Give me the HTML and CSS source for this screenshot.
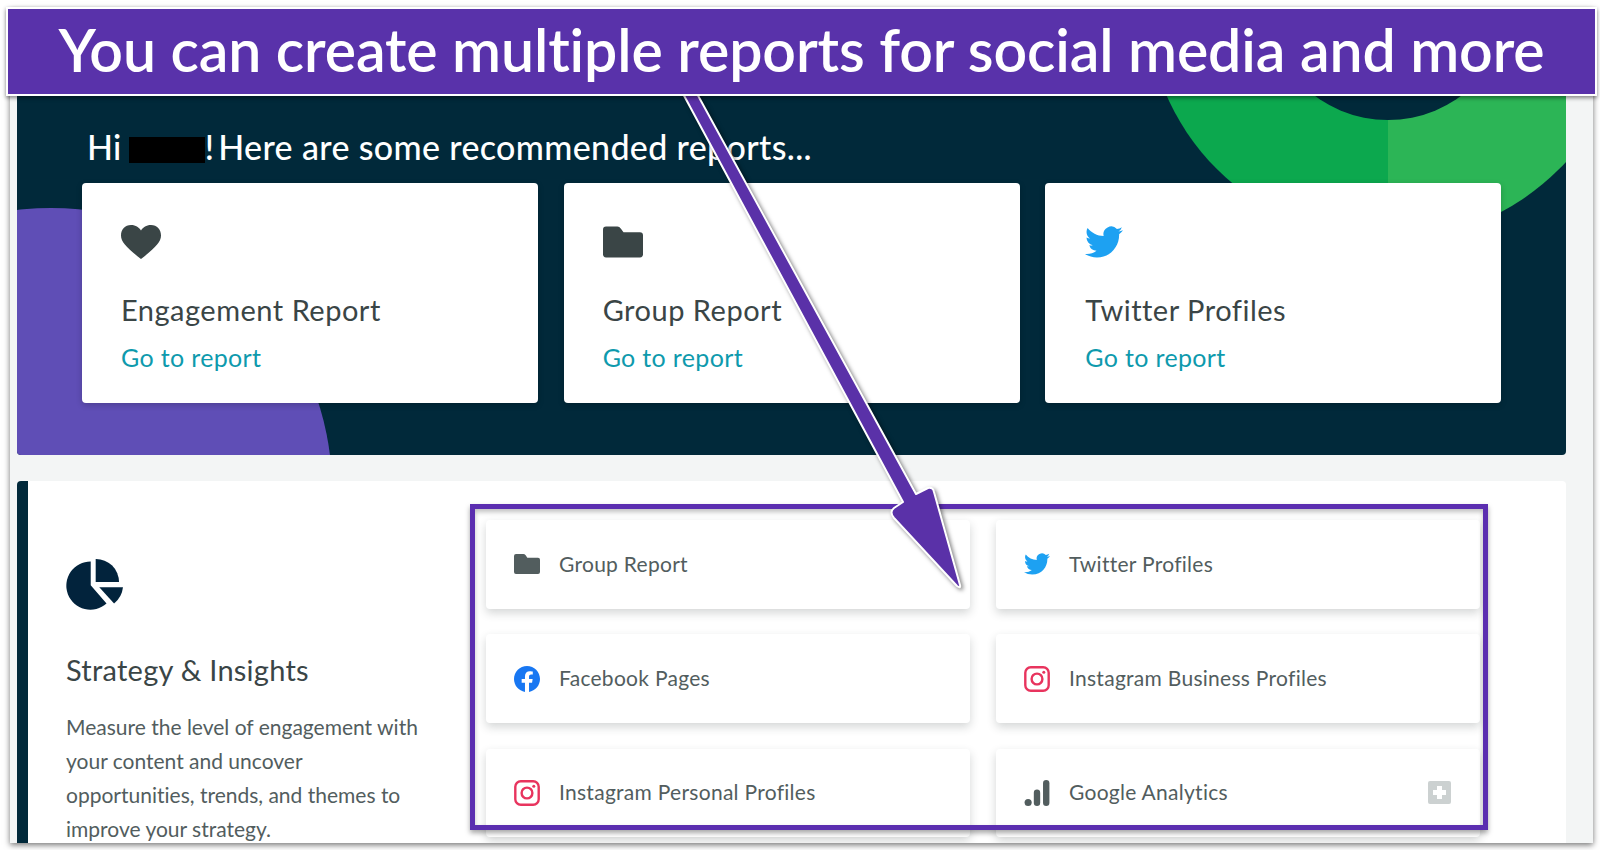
FILE: index.html
```html
<!DOCTYPE html>
<html lang="en">
<head>
<meta charset="utf-8">
<title>Reports</title>
<link rel="stylesheet" href="styles.css">
</head>
<body>
<svg class="defs" aria-hidden="true">
  <symbol id="i-heart" viewBox="0 0 40 34"><path fill="currentColor" d="M20 5.5C17.5 1.5 13.5 0 10 0 4 0 0 4.5 0 10.5 0 17 6 23 20 34 34 23 40 17 40 10.500 40 4.500 36 0 30 0 26.500 0 22.500 1.500 20 5.500Z"/></symbol>
  <symbol id="i-folder" viewBox="0 0 39 30"><path fill="currentColor" d="M3 0H14Q16 0 17.500 2L20 5.500H36A3 3 0 0 1 39 8.500V27A3 3 0 0 1 36 30H3A3 3 0 0 1 0 27V3A3 3 0 0 1 3 0Z"/></symbol>
  <symbol id="i-twitter" viewBox="0 1.500 24 21"><path fill="currentColor" d="M23.953 4.570a10 10 0 01-2.825.775 4.958 4.958 0 002.163-2.723c-.951.555-2.005.959-3.127 1.184a4.920 4.920 0 00-8.384 4.482C7.690 8.095 4.067 6.130 1.640 3.162a4.822 4.822 0 00-.666 2.475c0 1.710.870 3.213 2.188 4.096a4.904 4.904 0 01-2.228-.616v.060a4.923 4.923 0 003.946 4.827 4.996 4.996 0 01-2.212.085 4.936 4.936 0 004.604 3.417 9.867 9.867 0 01-6.102 2.105c-.390 0-.779-.023-1.170-.067a13.995 13.995 0 007.557 2.209c9.053 0 13.998-7.496 13.998-13.985 0-.210 0-.420-.015-.630A9.935 9.935 0 0024 4.590z"/></symbol>
  <symbol id="i-facebook" viewBox="0 0 24 24"><path fill="currentColor" d="M24 12.073c0-6.627-5.373-12-12-12s-12 5.373-12 12c0 5.990 4.388 10.954 10.125 11.854v-8.385H7.078v-3.470h3.047V9.430c0-3.007 1.792-4.669 4.533-4.669 1.312 0 2.686.235 2.686.235v2.953H15.830c-1.491 0-1.956.925-1.956 1.874v2.250h3.328l-.532 3.470h-2.796v8.385C19.612 23.027 24 18.062 24 12.073z"/></symbol>
  <symbol id="i-instagram" viewBox="0 0 26 26"><rect x="1.300" y="1.300" width="23.400" height="23.400" rx="5.500" fill="none" stroke="currentColor" stroke-width="2.400"/><circle cx="13" cy="13" r="5.400" fill="none" stroke="currentColor" stroke-width="2.400"/><circle cx="19.800" cy="6.200" r="1.500" fill="currentColor"/></symbol>
  <symbol id="i-analytics" viewBox="0 0 21 22"><circle cx="3" cy="19" r="3" fill="currentColor"/><rect x="7.800" y="8" width="5.400" height="14" rx="2.700" fill="currentColor"/><rect x="15.600" y="0" width="5.400" height="22" rx="2.700" fill="currentColor"/></symbol>
</svg>

<main class="shot">
  <section class="hero">
    <div class="blob blob-purple"></div>
    <div class="blob blob-green"></div>
    <div class="blob blob-navy"></div>
    <h1 class="greeting">Hi <span class="redact"></span><span class="bang">! </span>Here are some recommended reports...</h1>
    <div class="cards">
      <article class="card">
        <svg class="card-icon icon-heart"><use href="#i-heart"/></svg>
        <h2 class="card-title">Engagement Report</h2>
        <a class="card-link">Go to report</a>
      </article>
      <article class="card">
        <svg class="card-icon icon-folder"><use href="#i-folder"/></svg>
        <h2 class="card-title">Group Report</h2>
        <a class="card-link">Go to report</a>
      </article>
      <article class="card">
        <svg class="card-icon icon-twitter"><use href="#i-twitter"/></svg>
        <h2 class="card-title">Twitter Profiles</h2>
        <a class="card-link">Go to report</a>
      </article>
    </div>
  </section>

  <section class="panel">
    <div class="intro">
      <svg class="pie" viewBox="18 52 174 158"><path d="M92 63V135L140 190A73 73 0 1 1 92 63Z"/><path d="M107 55A70 70 0 0 1 178 125H107Z"/><path d="M118 141H190A72 72 0 0 1 163 190Z"/></svg>
      <h2 class="intro-title">Strategy &amp; Insights</h2>
      <p class="intro-text">Measure the level of engagement with your content and uncover opportunities, trends, and themes to improve your strategy.</p>
    </div>
    <div class="tiles">
      <div class="tile"><svg class="tile-icon tone-folder"><use href="#i-folder"/></svg><span class="tile-label">Group Report</span></div>
      <div class="tile"><svg class="tile-icon tone-twitter"><use href="#i-twitter"/></svg><span class="tile-label">Twitter Profiles</span></div>
      <div class="tile"><svg class="tile-icon tone-facebook"><use href="#i-facebook"/></svg><span class="tile-label">Facebook Pages</span></div>
      <div class="tile"><svg class="tile-icon tone-instagram"><use href="#i-instagram"/></svg><span class="tile-label">Instagram Business Profiles</span></div>
      <div class="tile"><svg class="tile-icon tone-instagram"><use href="#i-instagram"/></svg><span class="tile-label">Instagram Personal Profiles</span></div>
      <div class="tile"><svg class="tile-icon tone-folder"><use href="#i-analytics"/></svg><span class="tile-label">Google Analytics</span><span class="plus"></span></div>
    </div>
  </section>
</main>

<div class="highlight"></div>
<svg class="arrow" viewBox="0 0 1600 850">
  <path d="M681 90H695L916 494L928 488Q933 487 934 492L960 585Q961 589 957 586L894 518Q889 512 894 508L903 502Z"/>
</svg>
<header class="banner">You can create multiple reports for social media and more</header>
</body>
</html>
```

FILE: styles.css
```css
* { box-sizing: border-box; }

html, body { margin: 0; height: 850px; overflow: hidden; }

body {
  position: relative;
  background: #fff;
  font-family: "Lato", "Liberation Sans", sans-serif;
  font-variant-ligatures: none;
}

.defs { position: absolute; width: 0; height: 0; }

.shot {
  height: 835px;
  margin: 8px 7px 0 10px;
  padding: 0 27px 0 7px;
  background: #f3f5f5;
  overflow: hidden;
  box-shadow: 0 2px 6px rgba(0, 0, 0, .55);
}

.hero {
  position: relative;
  height: 447px;
  padding: 118px 64.5px 0 65px;
  background: #01293a;
  border-radius: 0 0 4px 4px;
  overflow: hidden;
}

.blob { position: absolute; border-radius: 50%; }
.blob-purple { left: -247px; top: 200px; width: 562px; height: 562px; background: #5f4eb6; }
.blob-green {
  left: 1129px; top: -252px; width: 484px; height: 484px;
  background: linear-gradient(90deg, #0ca84e 50%, #2cb556 50%);
}
.blob-navy { left: 1248px; top: -134px; width: 246px; height: 246px; background: #01293a; }

.greeting {
  position: relative;
  margin: 0 0 15px 5px;
  font-size: 34px;
  line-height: 42px;
  font-weight: 500;
  letter-spacing: .35px;
  color: #fff;
}

.redact {
  display: inline-block;
  width: 76px;
  height: 26px;
  margin-left: -2px;
  background: #000;
  vertical-align: -3px;
}

.bang { word-spacing: -5px; }

.cards {
  position: relative;
  display: grid;
  grid-template-columns: repeat(3, 1fr);
  gap: 25.5px;
}

.card {
  display: flex;
  flex-direction: column;
  height: 220px;
  padding: 42px 39px 0;
  background: #fff;
  border-radius: 4px;
  box-shadow: 0 2px 6px rgba(0, 0, 0, .2);
}

.card:last-child { padding-left: 40px; }

.card-icon { display: block; height: 34px; width: 40px; color: #3a4546; flex: none; }
.icon-twitter { color: #1da1f2; width: 38px; }

.card-title {
  margin: 33px 0 0;
  font-size: 29px;
  line-height: 36px;
  font-weight: 400;
  letter-spacing: .5px;
  color: #3a4546;
}

.card-link {
  margin-top: 13px;
  font-size: 25px;
  line-height: 32px;
  letter-spacing: .34px;
  color: #0e9aad;
}

.panel {
  display: flex;
  height: 400px;
  margin-top: 26px;
  background: #fff;
  border-left: 11px solid #01293a;
  border-radius: 4px;
}

.intro { flex: none; width: 458px; padding: 77px 0 0 38px; }
.pie { display: block; width: 58px; height: 52px; fill: #02233c; }

.intro-title {
  margin: 42px 0 0;
  font-size: 29px;
  line-height: 36px;
  font-weight: 400;
  letter-spacing: .25px;
  color: #3a4546;
}

.intro-text {
  width: 362px;
  margin: 22px 0 0;
  font-size: 21px;
  line-height: 34px;
  color: #525d5e;
}

.tiles {
  display: grid;
  grid-template-columns: repeat(2, 484px);
  grid-auto-rows: 88.5px;
  gap: 25.8px 26px;
  margin-top: 39px;
}

.tile {
  display: flex;
  align-items: center;
  padding: 0 29px 0 28px;
  background: #fff;
  border-radius: 4px;
  box-shadow: 0 4px 10px rgba(40, 50, 50, .2);
  font-size: 21px;
  letter-spacing: .28px;
  color: #525d5e;
}

.tile-icon { flex: none; width: 26px; height: 26px; margin-right: 19px; }
.tile-label { padding-bottom: 2px; }
.tone-folder { color: #525d5e; }
.tone-twitter { color: #1da1f2; }
.tone-facebook { color: #1877f2; }
.tone-instagram { color: #e8345e; }

.plus {
  position: relative;
  width: 23px;
  height: 23px;
  margin-left: auto;
  border-radius: 2px;
  background:
    linear-gradient(#fff, #fff) center / 13px 5px no-repeat,
    linear-gradient(#fff, #fff) center / 5px 13px no-repeat,
    #ccd1d1;
}

.highlight {
  position: absolute;
  left: 470px;
  top: 504px;
  width: 1018px;
  height: 326px;
  border: 5px solid #5b2eb0;
  box-shadow: 0 3px 5px rgba(0, 0, 0, .35), inset 0 3px 5px rgba(0, 0, 0, .25);
}

.arrow {
  position: absolute;
  left: 0;
  top: 0;
  width: 1600px;
  height: 850px;
  filter: drop-shadow(2px 2px 2px rgba(0, 0, 0, .5));
}

.arrow path { fill: #5a31a8; stroke: #fff; stroke-width: 2; stroke-linejoin: round; }

.banner {
  position: absolute;
  left: 6px;
  top: 7px;
  width: 1591px;
  height: 89px;
  border: 2px solid #fff;
  background: #5932aa;
  box-shadow: 0 2px 4px rgba(0, 0, 0, .45);
  color: #fff;
  font-size: 59px;
  font-weight: 600;
  letter-spacing: -.11px;
  line-height: 82px;
  text-align: center;
  white-space: nowrap;
}
```
